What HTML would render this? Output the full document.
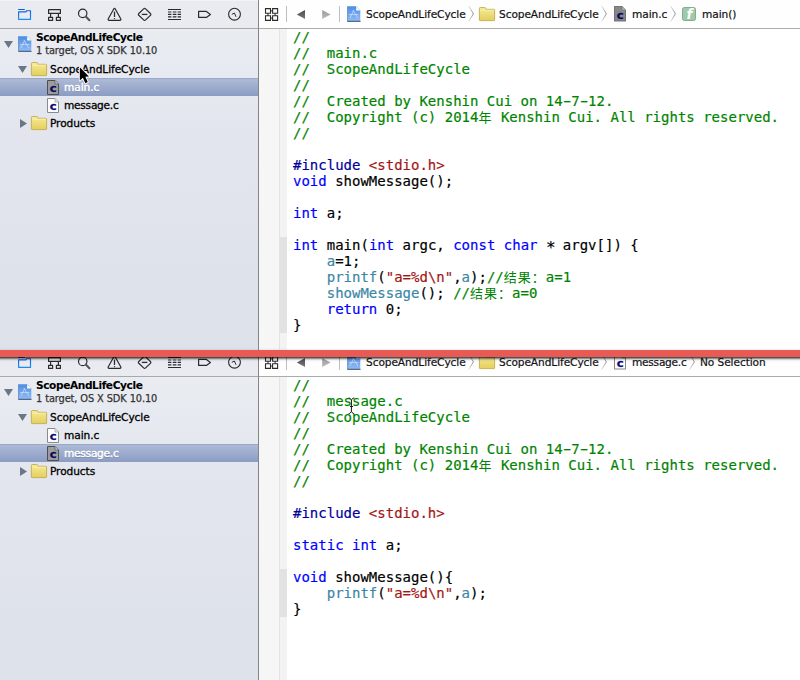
<!DOCTYPE html>
<html><head><meta charset="utf-8"><title>Xcode</title>
<style>
html,body{margin:0;padding:0}
body{width:800px;height:680px;overflow:hidden;position:relative;background:#fff;font-family:"DejaVu Sans","Liberation Sans","Noto Sans CJK SC",sans-serif}
.pane{position:absolute;left:0;width:800px;overflow:hidden}
#p1{top:0;height:350px;z-index:2}
#p2{top:348px;height:332px;z-index:1}
.side{position:absolute;left:0;top:0;width:258px;height:350px;background:linear-gradient(#e9ecf1 29px,#e2e5ed 140px,#dde1ea 345px)}
.vdiv{position:absolute;left:258px;top:0;width:1px;height:400px;background:#858585}
.ntb{position:absolute;left:0;top:0;width:258px;height:28px;background:#e9ebf0;border-bottom:1px solid #a9a9a9;box-shadow:inset 0 1px 0 #f2f3f6}
.ntb svg{position:absolute;left:0;top:0}
.row{position:absolute;left:0;width:258px;height:18px;font-size:10.6px;letter-spacing:-.08px;-webkit-text-stroke:.3px;color:#000;line-height:18px;white-space:nowrap}
.row span{position:absolute;top:0}
.sel{background:linear-gradient(#adbad7,#8b9cc3);border-top:1px solid #9aa9ca;box-sizing:border-box;color:#fff;text-shadow:0 1px 0 rgba(60,70,100,.5)}
.sel span{top:-1px;-webkit-text-stroke:.45px}
.ptitle{position:absolute;left:36px;top:30px;font-weight:bold;font-size:10.6px;letter-spacing:-.4px;-webkit-text-stroke:.08px;line-height:14px;white-space:nowrap}
.psub{position:absolute;left:36px;top:44px;font-size:9.8px;letter-spacing:-.1px;-webkit-text-stroke:.25px;line-height:13px;color:#333;white-space:nowrap}
.ico{position:absolute;overflow:visible}
.ed{position:absolute;left:259px;top:0;width:541px;height:400px;background:#fff}
.jb{position:absolute;left:0;top:0;width:541px;height:28px;background:#fefefe;border-bottom:1px solid #ababab;font-size:10.6px;letter-spacing:-.08px;-webkit-text-stroke:.2px;line-height:28px;white-space:nowrap;color:#111}
.jb span{position:absolute;top:0}
.gut{position:absolute;left:0;top:29px;width:20px;height:400px;background:#f6f6f6;border-right:1px solid #e4e4e4}
.rib{position:absolute;left:21px;top:29px;width:7px;height:400px;background:#f3f3f3}
.fold{position:absolute;left:21px;width:7px;background:#e2e2e2}
pre{position:absolute;left:34px;top:29px;-webkit-text-stroke:.18px;margin:0;font:14px/16px "DejaVu Sans Mono","Liberation Mono","Noto Sans CJK SC",monospace;color:#000;letter-spacing:0}
.a{position:relative;top:2.5px;font-size:16px;letter-spacing:-1.2px;line-height:1px}
.h{display:inline-block;transform:scaleX(1.75);line-height:1px}
.z{-webkit-text-stroke:0;font-size:13px;letter-spacing:1px;line-height:1px}
.c{color:#008400}.k{color:#0000ff}.p{color:#00009a}.s{color:#a31515}.f{color:#3a87a8}.n{color:#000}
.cur{z-index:5}
#red{z-index:4;position:absolute;left:-10px;top:350px;width:820px;height:6.9px;background:#ea5a55;box-shadow:0 1.5px 2.5px rgba(0,0,0,.85)}
</style></head><body>
<svg width="0" height="0" style="position:absolute;left:0;top:0"><linearGradient id="gpj" x1="0" y1="0" x2="0" y2="1"><stop offset="0" stop-color="#4d8ce2"/><stop offset="1" stop-color="#8fbcf6"/></linearGradient>
<linearGradient id="gbl" gradientUnits="userSpaceOnUse" x1="0" y1="9" x2="0" y2="20"><stop offset="0" stop-color="#0d58de"/><stop offset="1" stop-color="#1d8ff6"/></linearGradient>
<linearGradient id="gfo" x1="0" y1="0" x2="0" y2="1"><stop offset="0" stop-color="#f6ea98"/><stop offset="1" stop-color="#e4cf5c"/></linearGradient>
<linearGradient id="gar" x1="0" y1="0" x2="0" y2="1"><stop offset="0" stop-color="#4a4a4a"/><stop offset="1" stop-color="#7a7a7a"/></linearGradient>
<linearGradient id="gar2" x1="0" y1="0" x2="0" y2="1"><stop offset="0" stop-color="#9a9a9a"/><stop offset="1" stop-color="#bcbcbc"/></linearGradient>
<linearGradient id="gch" x1="0" y1="0" x2="0" y2="1"><stop offset="0" stop-color="#e6e6e6"/><stop offset=".5" stop-color="#7c7c7c"/><stop offset="1" stop-color="#e6e6e6"/></linearGradient>
</svg>
<div class="pane" id="p1">
 <div class="side"></div>
 <div class="ntb"></div>
 <div class="ptitle">ScopeAndLifeCycle</div>
 <div class="psub">1 target, OS X SDK 10.10</div>
 <div class="row" style="top:60px"><span style="left:50px">ScopeAndLifeCycle</span></div>
 <div class="row sel" style="top:78px"><span style="left:64px">main.c</span></div>
 <div class="row" style="top:96px"><span style="left:64px;letter-spacing:-.25px">message.c</span></div>
 <div class="row" style="top:114px"><span style="left:50px">Products</span></div>
 <svg class="ico" style="left:0;top:0" width="258" height="28" viewBox="0 0 258 28"><g fill="none" stroke="#2b2b2b" stroke-width="1.2" stroke-linejoin="round">
  <path d="M18.2 9.5H24.8M18.6 11.8H25.9L26.7 10.7H30.5V19.4H18.6Z" stroke="url(#gbl)" stroke-width="1.15"/>
  <path d="M48.6 9.6H60.4V13.4H48.6ZM50.6 13.4V17.2M58.4 13.4V17.2M48.6 17.4H52.6V20.4H48.6ZM56.4 17.4H60.4V20.4H56.4Z"/>
  <circle cx="82.7" cy="13.4" r="4.2"/>
  <path d="M85.8 16.6L89.4 20.2" stroke-width="2.1" stroke="#555" stroke-linecap="round"/>
  <path d="M113.6 9.2Q114.5 7.7 115.4 9.2L120.7 18.8Q121.4 20.3 119.8 20.3H109.2Q107.6 20.3 108.3 18.8Z"/>
  <path d="M114.5 11.6V17" stroke-width="1.3"/><path d="M114.5 18.2V19.2" stroke-width="1.3"/>
  <path d="M143.6 8.9Q144.6 8 145.6 8.9L150.4 13.5Q151.3 14.4 150.4 15.3L145.6 19.9Q144.6 20.8 143.6 19.9L138.8 15.3Q137.9 14.4 138.8 13.5Z"/>
  <path d="M141.8 14.4H147.4" stroke-width="1.3"/>
  <path d="M168 9.5H181M168 19.5H181" stroke-width="1.2"/>
  <path d="M168 12H171.4M172.8 12H176.4M177.6 12H181M168 14.4H171.4M172.8 14.4H176.4M177.6 14.4H181M168 16.8H171.4M172.8 16.8H176.4M177.6 16.8H181" stroke-width="1.2"/>
  <path d="M198.6 11.4H206.4L210.4 14.4L206.4 17.4H198.6Z"/>
  <circle cx="234.5" cy="14.2" r="5.9" stroke-width="1.1"/>
  <path d="M231.8 14.4L234.4 13L236 16.8" stroke-width="1"/>
 </g></svg>
 <svg class="ico" style="left:4px;top:41px" width="9" height="7" viewBox="0 0 9 7"><path d="M0 0H9L4.5 7Z" fill="#6c7786"/></svg>
 <svg class="ico" style="left:18px;top:36px" width="14" height="16" viewBox="0 0 14 16"><path d="M0.5 0.3H9.2L13.3 4.4V15.2H0.5Z" fill="url(#gpj)"/>
 <path d="M0.5 0.3V15.2" stroke="#3f6fb5" stroke-width=".8" fill="none" opacity=".7"/>
 <path d="M0.3 15.3H13.5" stroke="#3b4a66" stroke-width="1" fill="none"/>
 <path d="M9.2 0.3V4.4H13.3Z" fill="#fff"/>
 <path d="M9.2 0.3L13.3 4.4" stroke="#c9d6ea" stroke-width=".6" fill="none"/>
 <path d="M6.6 4.6L3.2 11.6M6.2 4.6L10.6 11.6M2.4 8.6H11.2" stroke="#dbe8fb" stroke-width="1" fill="none" stroke-linecap="round" opacity=".65"/></svg>
 <svg class="ico" style="left:18px;top:66px" width="9" height="7" viewBox="0 0 9 7"><path d="M0 0H9L4.5 7Z" fill="#6c7786"/></svg>
 <svg class="ico" style="left:31px;top:62px" width="16" height="14" viewBox="0 0 16 14"><path d="M1.3 0.5H5.8Q6.4 0.5 6.6 1.1L7 2.3H15Q15.6 2.3 15.6 2.9V13Q15.6 13.6 15 13.6H1Q.4 13.6 .4 13V1.4Q.4 .5 1.3 .5Z" fill="url(#gfo)" stroke="#c2ad4e" stroke-width=".9"/>
 <path d="M1 3.2H15" stroke="#fbf3b8" stroke-width=".8" fill="none"/></svg>
 <svg class="ico" style="left:47px;top:79.5px" width="12" height="15" viewBox="0 0 12 15"><path d="M0.5 0.5H8L11.5 4V14.5H0.5Z" fill="#9c9c9c" stroke="#4e4e4e" stroke-width="1"/>
 <path d="M8 0.5V4H11.5" fill="#c4c4c4" stroke="#5a5a5a" stroke-width=".7"/>
 <text x="0" y="0" font-family="'DejaVu Sans','Liberation Sans',sans-serif" font-weight="bold" font-size="10.3" fill="#08085e" stroke="#08085e" stroke-width=".25" text-anchor="middle" transform="translate(6.1 12.1) scale(1.13 1)">c</text></svg>
 <svg class="ico" style="left:47px;top:97.5px" width="12" height="15" viewBox="0 0 12 15"><path d="M0.5 0.5H8L11.5 4V14.5H0.5Z" fill="#fdfdfd" stroke="#8a8a8a" stroke-width="1"/>
 <path d="M8 0.5V4H11.5" fill="#e9e9e9" stroke="#9a9a9a" stroke-width=".7"/>
 <text x="0" y="0" font-family="'DejaVu Sans','Liberation Sans',sans-serif" font-weight="bold" font-size="10.3" fill="#0a0a78" stroke="#0a0a78" stroke-width=".25" text-anchor="middle" transform="translate(6.1 12.1) scale(1.13 1)">c</text></svg>
 <svg class="ico" style="left:19.5px;top:119px" width="7" height="9" viewBox="0 0 7 9"><path d="M0 0V9L7 4.5Z" fill="#6c7786"/></svg>
 <svg class="ico" style="left:31px;top:116px" width="16" height="14" viewBox="0 0 16 14"><path d="M1.3 0.5H5.8Q6.4 0.5 6.6 1.1L7 2.3H15Q15.6 2.3 15.6 2.9V13Q15.6 13.6 15 13.6H1Q.4 13.6 .4 13V1.4Q.4 .5 1.3 .5Z" fill="url(#gfo)" stroke="#c2ad4e" stroke-width=".9"/>
 <path d="M1 3.2H15" stroke="#fbf3b8" stroke-width=".8" fill="none"/></svg>
 <div class="vdiv"></div>
 <div class="ed">
  <div class="jb"><span style="left:107px">ScopeAndLifeCycle</span><span style="left:240px">ScopeAndLifeCycle</span><span style="left:373px">main.c</span><span style="left:443px">main()</span></div>
  <svg class="ico" style="left:0;top:0" width="90" height="28" viewBox="0 0 90 28"><g fill="none" stroke="#2b2b2b" stroke-width="1.1">
  <path d="M6.5 8.6H11.5V13.2H6.5ZM13.6 8.6H18.6V13.2H13.6ZM6.5 15.8H11.5V20.4H6.5ZM13.6 15.8H18.6V20.4H13.6Z"/>
  <path d="M11.5 10.9H13.6M11.5 18.1H13.6M9 13.2V15.8M16.1 13.2V15.8" stroke-width="1"/>
 </g>
 <path d="M27.5 6V22M80.5 6V22" stroke="#bdbdbd" stroke-width="1" fill="none"/>
 <path d="M46 10V19L37.8 14.5Z" fill="url(#gar)"/>
 <path d="M63.2 10V19L71.6 14.5Z" fill="url(#gar2)"/></svg>
  <svg class="ico" style="left:88px;top:6px" width="14" height="16" viewBox="0 0 14 16"><path d="M0.5 0.3H9.2L13.3 4.4V15.2H0.5Z" fill="url(#gpj)"/>
 <path d="M0.5 0.3V15.2" stroke="#3f6fb5" stroke-width=".8" fill="none" opacity=".7"/>
 <path d="M0.3 15.3H13.5" stroke="#3b4a66" stroke-width="1" fill="none"/>
 <path d="M9.2 0.3V4.4H13.3Z" fill="#fff"/>
 <path d="M9.2 0.3L13.3 4.4" stroke="#c9d6ea" stroke-width=".6" fill="none"/>
 <path d="M6.6 4.6L3.2 11.6M6.2 4.6L10.6 11.6M2.4 8.6H11.2" stroke="#dbe8fb" stroke-width="1" fill="none" stroke-linecap="round" opacity=".65"/></svg>
  <svg class="ico" style="left:209.3px;top:6px" width="6" height="16" viewBox="0 0 6 16"><path d="M0.6 -0.2L5.4 7.8L0.6 15.8" stroke="url(#gch)" stroke-width=".9" fill="none"/></svg>
  <svg class="ico" style="left:220px;top:7px" width="16" height="14" viewBox="0 0 16 14"><path d="M1.3 0.5H5.8Q6.4 0.5 6.6 1.1L7 2.3H15Q15.6 2.3 15.6 2.9V13Q15.6 13.6 15 13.6H1Q.4 13.6 .4 13V1.4Q.4 .5 1.3 .5Z" fill="url(#gfo)" stroke="#c2ad4e" stroke-width=".9"/>
 <path d="M1 3.2H15" stroke="#fbf3b8" stroke-width=".8" fill="none"/></svg>
  <svg class="ico" style="left:342.3px;top:6px" width="6" height="16" viewBox="0 0 6 16"><path d="M0.6 -0.2L5.4 7.8L0.6 15.8" stroke="url(#gch)" stroke-width=".9" fill="none"/></svg>
  <svg class="ico" style="left:355px;top:6.2px" width="12" height="15.6" viewBox="0 0 12 15" preserveAspectRatio="none"><path d="M0.5 0.5H8L11.5 4V14.5H0.5Z" fill="#878787" stroke="#747474" stroke-width="1"/>
 <path d="M8 0.5V4H11.5" fill="#b4b4b4" stroke="#7c7c7c" stroke-width=".6"/>
 <text x="0" y="0" font-family="'DejaVu Sans','Liberation Sans',sans-serif" font-weight="bold" font-size="10.3" fill="#08085e" stroke="#08085e" stroke-width=".25" text-anchor="middle" transform="translate(6.1 12.1) scale(1.13 1)">c</text></svg>
  <svg class="ico" style="left:411.4px;top:6px" width="6" height="16" viewBox="0 0 6 16"><path d="M0.6 -0.2L5.4 7.8L0.6 15.8" stroke="url(#gch)" stroke-width=".9" fill="none"/></svg>
  <svg class="ico" style="left:423px;top:7px" width="14" height="14" viewBox="0 0 14 14"><rect x=".5" y=".5" width="13" height="13" rx="1.8" fill="#9fc9a9" stroke="#7fb08b" stroke-width="1"/>
 <text x="7.4" y="11.6" font-family="'DejaVu Sans','Liberation Sans',sans-serif" font-style="italic" font-weight="bold" font-size="13.5" fill="#fff" text-anchor="middle">f</text></svg>
  <div class="gut"></div><div class="rib"></div><div class="fold" style="top:237px;height:96px"></div>
<pre><span class="c">//
//  main.c
//  ScopeAndLifeCycle
//
//  Created by Kenshin Cui on 14<span class="h">-</span>7<span class="h">-</span>12.
//  Copyright (c) 2014<span class="z">年</span> Kenshin Cui. All rights reserved.
//</span>

<span class="p">#include </span><span class="s">&lt;stdio.h&gt;</span>
<span class="k">void</span> showMessage();

<span class="k">int</span> a;

<span class="k">int</span> main(<span class="k">int</span> argc, <span class="k">const</span> <span class="k">char</span> <span class="a">*</span> argv[]) {
    <span class="f">a</span>=<span class="n">1</span>;
    <span class="f">printf</span>(<span class="s">"a=%d\n"</span>,<span class="f">a</span>);<span class="c">//<span class="z">结果：</span>a=1</span>
    <span class="f">showMessage</span>(); <span class="c">//<span class="z">结果：</span>a=0</span>
    <span class="k">return</span> <span class="n">0</span>;
}</pre>
 </div>
</div>
<div class="pane" id="p2">
 <div class="side"></div>
 <div class="ntb"></div>
 <div class="ptitle">ScopeAndLifeCycle</div>
 <div class="psub">1 target, OS X SDK 10.10</div>
 <div class="row" style="top:60px"><span style="left:50px">ScopeAndLifeCycle</span></div>
 <div class="row" style="top:78px"><span style="left:64px">main.c</span></div>
 <div class="row sel" style="top:96px"><span style="left:64px;letter-spacing:-.25px">message.c</span></div>
 <div class="row" style="top:114px"><span style="left:50px">Products</span></div>
 <svg class="ico" style="left:0;top:0" width="258" height="28" viewBox="0 0 258 28"><g fill="none" stroke="#2b2b2b" stroke-width="1.2" stroke-linejoin="round">
  <path d="M18.2 9.5H24.8M18.6 11.8H25.9L26.7 10.7H30.5V19.4H18.6Z" stroke="url(#gbl)" stroke-width="1.15"/>
  <path d="M48.6 9.6H60.4V13.4H48.6ZM50.6 13.4V17.2M58.4 13.4V17.2M48.6 17.4H52.6V20.4H48.6ZM56.4 17.4H60.4V20.4H56.4Z"/>
  <circle cx="82.7" cy="13.4" r="4.2"/>
  <path d="M85.8 16.6L89.4 20.2" stroke-width="2.1" stroke="#555" stroke-linecap="round"/>
  <path d="M113.6 9.2Q114.5 7.7 115.4 9.2L120.7 18.8Q121.4 20.3 119.8 20.3H109.2Q107.6 20.3 108.3 18.8Z"/>
  <path d="M114.5 11.6V17" stroke-width="1.3"/><path d="M114.5 18.2V19.2" stroke-width="1.3"/>
  <path d="M143.6 8.9Q144.6 8 145.6 8.9L150.4 13.5Q151.3 14.4 150.4 15.3L145.6 19.9Q144.6 20.8 143.6 19.9L138.8 15.3Q137.9 14.4 138.8 13.5Z"/>
  <path d="M141.8 14.4H147.4" stroke-width="1.3"/>
  <path d="M168 9.5H181M168 19.5H181" stroke-width="1.2"/>
  <path d="M168 12H171.4M172.8 12H176.4M177.6 12H181M168 14.4H171.4M172.8 14.4H176.4M177.6 14.4H181M168 16.8H171.4M172.8 16.8H176.4M177.6 16.8H181" stroke-width="1.2"/>
  <path d="M198.6 11.4H206.4L210.4 14.4L206.4 17.4H198.6Z"/>
  <circle cx="234.5" cy="14.2" r="5.9" stroke-width="1.1"/>
  <path d="M231.8 14.4L234.4 13L236 16.8" stroke-width="1"/>
 </g></svg>
 <svg class="ico" style="left:4px;top:41px" width="9" height="7" viewBox="0 0 9 7"><path d="M0 0H9L4.5 7Z" fill="#6c7786"/></svg>
 <svg class="ico" style="left:18px;top:36px" width="14" height="16" viewBox="0 0 14 16"><path d="M0.5 0.3H9.2L13.3 4.4V15.2H0.5Z" fill="url(#gpj)"/>
 <path d="M0.5 0.3V15.2" stroke="#3f6fb5" stroke-width=".8" fill="none" opacity=".7"/>
 <path d="M0.3 15.3H13.5" stroke="#3b4a66" stroke-width="1" fill="none"/>
 <path d="M9.2 0.3V4.4H13.3Z" fill="#fff"/>
 <path d="M9.2 0.3L13.3 4.4" stroke="#c9d6ea" stroke-width=".6" fill="none"/>
 <path d="M6.6 4.6L3.2 11.6M6.2 4.6L10.6 11.6M2.4 8.6H11.2" stroke="#dbe8fb" stroke-width="1" fill="none" stroke-linecap="round" opacity=".65"/></svg>
 <svg class="ico" style="left:18px;top:66px" width="9" height="7" viewBox="0 0 9 7"><path d="M0 0H9L4.5 7Z" fill="#6c7786"/></svg>
 <svg class="ico" style="left:31px;top:62px" width="16" height="14" viewBox="0 0 16 14"><path d="M1.3 0.5H5.8Q6.4 0.5 6.6 1.1L7 2.3H15Q15.6 2.3 15.6 2.9V13Q15.6 13.6 15 13.6H1Q.4 13.6 .4 13V1.4Q.4 .5 1.3 .5Z" fill="url(#gfo)" stroke="#c2ad4e" stroke-width=".9"/>
 <path d="M1 3.2H15" stroke="#fbf3b8" stroke-width=".8" fill="none"/></svg>
 <svg class="ico" style="left:47px;top:79.5px" width="12" height="15" viewBox="0 0 12 15"><path d="M0.5 0.5H8L11.5 4V14.5H0.5Z" fill="#fdfdfd" stroke="#8a8a8a" stroke-width="1"/>
 <path d="M8 0.5V4H11.5" fill="#e9e9e9" stroke="#9a9a9a" stroke-width=".7"/>
 <text x="0" y="0" font-family="'DejaVu Sans','Liberation Sans',sans-serif" font-weight="bold" font-size="10.3" fill="#0a0a78" stroke="#0a0a78" stroke-width=".25" text-anchor="middle" transform="translate(6.1 12.1) scale(1.13 1)">c</text></svg>
 <svg class="ico" style="left:47px;top:97.5px" width="12" height="15" viewBox="0 0 12 15"><path d="M0.5 0.5H8L11.5 4V14.5H0.5Z" fill="#9c9c9c" stroke="#4e4e4e" stroke-width="1"/>
 <path d="M8 0.5V4H11.5" fill="#c4c4c4" stroke="#5a5a5a" stroke-width=".7"/>
 <text x="0" y="0" font-family="'DejaVu Sans','Liberation Sans',sans-serif" font-weight="bold" font-size="10.3" fill="#08085e" stroke="#08085e" stroke-width=".25" text-anchor="middle" transform="translate(6.1 12.1) scale(1.13 1)">c</text></svg>
 <svg class="ico" style="left:19.5px;top:119px" width="7" height="9" viewBox="0 0 7 9"><path d="M0 0V9L7 4.5Z" fill="#6c7786"/></svg>
 <svg class="ico" style="left:31px;top:116px" width="16" height="14" viewBox="0 0 16 14"><path d="M1.3 0.5H5.8Q6.4 0.5 6.6 1.1L7 2.3H15Q15.6 2.3 15.6 2.9V13Q15.6 13.6 15 13.6H1Q.4 13.6 .4 13V1.4Q.4 .5 1.3 .5Z" fill="url(#gfo)" stroke="#c2ad4e" stroke-width=".9"/>
 <path d="M1 3.2H15" stroke="#fbf3b8" stroke-width=".8" fill="none"/></svg>
 <div class="vdiv"></div>
 <div class="ed">
  <div class="jb"><span style="left:107px">ScopeAndLifeCycle</span><span style="left:240px">ScopeAndLifeCycle</span><span style="left:373px;letter-spacing:-.25px">message.c</span><span style="left:441px">No Selection</span></div>
  <svg class="ico" style="left:0;top:0" width="90" height="28" viewBox="0 0 90 28"><g fill="none" stroke="#2b2b2b" stroke-width="1.1">
  <path d="M6.5 8.6H11.5V13.2H6.5ZM13.6 8.6H18.6V13.2H13.6ZM6.5 15.8H11.5V20.4H6.5ZM13.6 15.8H18.6V20.4H13.6Z"/>
  <path d="M11.5 10.9H13.6M11.5 18.1H13.6M9 13.2V15.8M16.1 13.2V15.8" stroke-width="1"/>
 </g>
 <path d="M27.5 6V22M80.5 6V22" stroke="#bdbdbd" stroke-width="1" fill="none"/>
 <path d="M46 10V19L37.8 14.5Z" fill="url(#gar)"/>
 <path d="M63.2 10V19L71.6 14.5Z" fill="url(#gar2)"/></svg>
  <svg class="ico" style="left:88px;top:6px" width="14" height="16" viewBox="0 0 14 16"><path d="M0.5 0.3H9.2L13.3 4.4V15.2H0.5Z" fill="url(#gpj)"/>
 <path d="M0.5 0.3V15.2" stroke="#3f6fb5" stroke-width=".8" fill="none" opacity=".7"/>
 <path d="M0.3 15.3H13.5" stroke="#3b4a66" stroke-width="1" fill="none"/>
 <path d="M9.2 0.3V4.4H13.3Z" fill="#fff"/>
 <path d="M9.2 0.3L13.3 4.4" stroke="#c9d6ea" stroke-width=".6" fill="none"/>
 <path d="M6.6 4.6L3.2 11.6M6.2 4.6L10.6 11.6M2.4 8.6H11.2" stroke="#dbe8fb" stroke-width="1" fill="none" stroke-linecap="round" opacity=".65"/></svg>
  <svg class="ico" style="left:209.3px;top:6px" width="6" height="16" viewBox="0 0 6 16"><path d="M0.6 -0.2L5.4 7.8L0.6 15.8" stroke="url(#gch)" stroke-width=".9" fill="none"/></svg>
  <svg class="ico" style="left:220px;top:7px" width="16" height="14" viewBox="0 0 16 14"><path d="M1.3 0.5H5.8Q6.4 0.5 6.6 1.1L7 2.3H15Q15.6 2.3 15.6 2.9V13Q15.6 13.6 15 13.6H1Q.4 13.6 .4 13V1.4Q.4 .5 1.3 .5Z" fill="url(#gfo)" stroke="#c2ad4e" stroke-width=".9"/>
 <path d="M1 3.2H15" stroke="#fbf3b8" stroke-width=".8" fill="none"/></svg>
  <svg class="ico" style="left:342.3px;top:6px" width="6" height="16" viewBox="0 0 6 16"><path d="M0.6 -0.2L5.4 7.8L0.6 15.8" stroke="url(#gch)" stroke-width=".9" fill="none"/></svg>
  <svg class="ico" style="left:355px;top:6.2px" width="12" height="15.6" viewBox="0 0 12 15" preserveAspectRatio="none"><path d="M0.5 0.5H8L11.5 4V14.5H0.5Z" fill="#fdfdfd" stroke="#8a8a8a" stroke-width="1"/>
 <path d="M8 0.5V4H11.5" fill="#e9e9e9" stroke="#9a9a9a" stroke-width=".7"/>
 <text x="0" y="0" font-family="'DejaVu Sans','Liberation Sans',sans-serif" font-weight="bold" font-size="10.3" fill="#0a0a78" stroke="#0a0a78" stroke-width=".25" text-anchor="middle" transform="translate(6.1 12.1) scale(1.13 1)">c</text></svg>
  <svg class="ico" style="left:430.4px;top:6px" width="6" height="16" viewBox="0 0 6 16"><path d="M0.6 -0.2L5.4 7.8L0.6 15.8" stroke="url(#gch)" stroke-width=".9" fill="none"/></svg>
  
  <div class="gut"></div><div class="rib"></div><div class="fold" style="top:221px;height:48px"></div>
<pre><span class="c">//
//  message.c
//  ScopeAndLifeCycle
//
//  Created by Kenshin Cui on 14<span class="h">-</span>7<span class="h">-</span>12.
//  Copyright (c) 2014<span class="z">年</span> Kenshin Cui. All rights reserved.
//</span>

<span class="p">#include </span><span class="s">&lt;stdio.h&gt;</span>

<span class="k">static</span> <span class="k">int</span> a;

<span class="k">void</span> showMessage(){
    <span class="f">printf</span>(<span class="s">"a=%d\n"</span>,<span class="f">a</span>);
}</pre>
 </div>
</div>
<svg class="ico cur" style="left:75.7px;top:64.3px" width="17" height="23.4" viewBox="-3.6 -3 16 22"><path d="M0 0V12.6L2.9 9.9L5.2 15L7.5 14L5.2 9.1L8.6 8.7Z" fill="#000" stroke="#fff" stroke-width="1.7" stroke-linejoin="round"/><path d="M0 0V12.6L2.9 9.9L5.2 15L7.5 14L5.2 9.1L8.6 8.7Z" fill="#000"/></svg>
<svg class="ico cur" style="left:346px;top:396px" width="12" height="20" viewBox="0 0 12 20"><path d="M2.6 2L3.6 2.2L5.4 3.7L7.2 2.2L8.2 2M5.4 3.7V15.8M2.6 17.6L3.6 17.4L5.4 15.8L7.2 17.4L8.2 17.6M4 10.5H7" fill="none" stroke="#111" stroke-width="1"/></svg>
<div id="red"></div>
</body></html>
